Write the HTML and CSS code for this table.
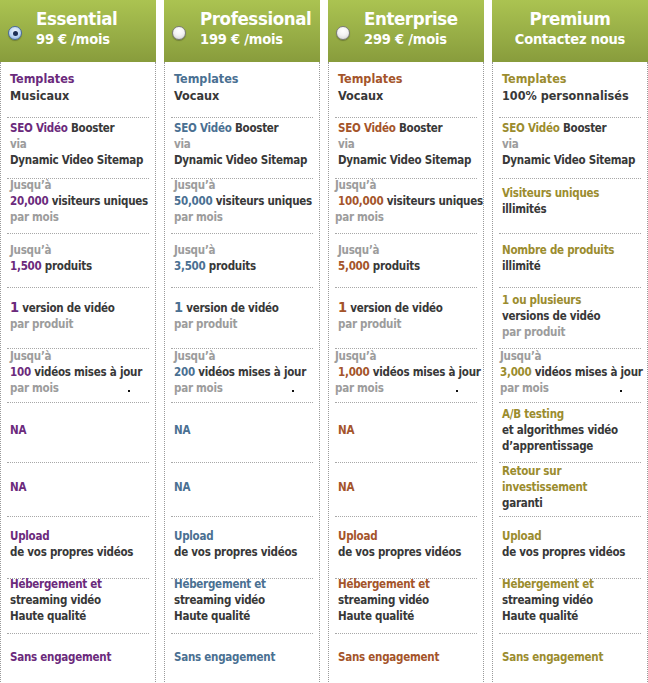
FILE: index.html
```html
<!DOCTYPE html>
<html lang="fr">
<head>
<meta charset="utf-8">
<title>Offres</title>
<link rel="stylesheet" href="styles.css">
</head>
<body>
<div class="plans">

  <div class="plan c1">
    <div class="head">
      <span class="radio checked"></span>
      <div class="title"><div class="name">Essential</div><div class="price">99 € /mois</div></div>
    </div>
    <div class="body">
      <div class="row r1"><div class="cell"><span class="hl">Templates</span><span>Musicaux</span></div></div>
      <div class="row r2"><div class="cell"><span><b class="hl">SEO Vidéo</b> Booster</span><span class="g">via</span><span>Dynamic Video Sitemap</span></div></div>
      <div class="row r3"><div class="cell"><span class="g">Jusqu’à</span><span><b class="hl">20,000</b> visiteurs uniques</span><span class="g">par mois</span></div></div>
      <div class="row r4"><div class="cell"><span class="g">Jusqu’à</span><span><b class="hl">1,500</b> produits</span></div></div>
      <div class="row r5"><div class="cell"><span><b class="hl big">1</b> version de vidéo</span><span class="g">par produit</span></div></div>
      <div class="row r6"><div class="cell"><span class="g">Jusqu’à</span><span><b class="hl">100</b> vidéos mises à jour</span><span class="g pm">par mois<i class="dot"></i></span></div></div>
      <div class="row r7"><div class="cell"><span class="hl">NA</span></div></div>
      <div class="row r8"><div class="cell"><span class="hl">NA</span></div></div>
      <div class="row r9"><div class="cell"><span class="hl">Upload</span><span>de vos propres vidéos</span></div></div>
      <div class="row r10"><div class="cell"><span class="hl">Hébergement et</span><span>streaming vidéo</span><span>Haute qualité</span></div></div>
      <div class="row r11"><div class="cell"><span class="hl">Sans engagement</span></div></div>
    </div>
  </div>

  <div class="plan c2">
    <div class="head">
      <span class="radio"></span>
      <div class="title"><div class="name">Professional</div><div class="price">199 € /mois</div></div>
    </div>
    <div class="body">
      <div class="row r1"><div class="cell"><span class="hl">Templates</span><span>Vocaux</span></div></div>
      <div class="row r2"><div class="cell"><span><b class="hl">SEO Vidéo</b> Booster</span><span class="g">via</span><span>Dynamic Video Sitemap</span></div></div>
      <div class="row r3"><div class="cell"><span class="g">Jusqu’à</span><span><b class="hl">50,000</b> visiteurs uniques</span><span class="g">par mois</span></div></div>
      <div class="row r4"><div class="cell"><span class="g">Jusqu’à</span><span><b class="hl">3,500</b> produits</span></div></div>
      <div class="row r5"><div class="cell"><span><b class="hl big">1</b> version de vidéo</span><span class="g">par produit</span></div></div>
      <div class="row r6"><div class="cell"><span class="g">Jusqu’à</span><span><b class="hl">200</b> vidéos mises à jour</span><span class="g pm">par mois<i class="dot"></i></span></div></div>
      <div class="row r7"><div class="cell"><span class="hl">NA</span></div></div>
      <div class="row r8"><div class="cell"><span class="hl">NA</span></div></div>
      <div class="row r9"><div class="cell"><span class="hl">Upload</span><span>de vos propres vidéos</span></div></div>
      <div class="row r10"><div class="cell"><span class="hl">Hébergement et</span><span>streaming vidéo</span><span>Haute qualité</span></div></div>
      <div class="row r11"><div class="cell"><span class="hl">Sans engagement</span></div></div>
    </div>
  </div>

  <div class="plan c3">
    <div class="head">
      <span class="radio"></span>
      <div class="title"><div class="name">Enterprise</div><div class="price">299 € /mois</div></div>
    </div>
    <div class="body">
      <div class="row r1"><div class="cell"><span class="hl">Templates</span><span>Vocaux</span></div></div>
      <div class="row r2"><div class="cell"><span><b class="hl">SEO Vidéo</b> Booster</span><span class="g">via</span><span>Dynamic Video Sitemap</span></div></div>
      <div class="row r3"><div class="cell"><span class="g out">Jusqu’à</span><span class="wide"><b class="hl">100,000</b> visiteurs uniques</span><span class="g out">par mois</span></div></div>
      <div class="row r4"><div class="cell"><span class="g">Jusqu’à</span><span><b class="hl">5,000</b> produits</span></div></div>
      <div class="row r5"><div class="cell"><span><b class="hl big">1</b> version de vidéo</span><span class="g">par produit</span></div></div>
      <div class="row r6"><div class="cell"><span class="g out">Jusqu’à</span><span class="wide"><b class="hl">1,000</b> vidéos mises à jour</span><span class="g pm out">par mois<i class="dot"></i></span></div></div>
      <div class="row r7"><div class="cell"><span class="hl">NA</span></div></div>
      <div class="row r8"><div class="cell"><span class="hl">NA</span></div></div>
      <div class="row r9"><div class="cell"><span class="hl">Upload</span><span>de vos propres vidéos</span></div></div>
      <div class="row r10"><div class="cell"><span class="hl">Hébergement et</span><span>streaming vidéo</span><span>Haute qualité</span></div></div>
      <div class="row r11"><div class="cell"><span class="hl">Sans engagement</span></div></div>
    </div>
  </div>

  <div class="plan c4">
    <div class="head center">
      <div class="title"><div class="name">Premium</div><div class="price">Contactez nous</div></div>
    </div>
    <div class="body">
      <div class="row r1"><div class="cell"><span class="hl">Templates</span><span>100% personnalisés</span></div></div>
      <div class="row r2"><div class="cell"><span><b class="hl">SEO Vidéo</b> Booster</span><span class="g">via</span><span>Dynamic Video Sitemap</span></div></div>
      <div class="row r3"><div class="cell"><span class="hl">Visiteurs uniques</span><span>illimités</span></div></div>
      <div class="row r4"><div class="cell"><span class="hl">Nombre de produits</span><span>illimité</span></div></div>
      <div class="row r5"><div class="cell"><span class="hl">1 ou plusieurs</span><span>versions de vidéo</span><span class="g">par produit</span></div></div>
      <div class="row r6"><div class="cell tight"><span class="g">Jusqu’à</span><span class="wide"><b class="hl">3,000</b> vidéos mises à jour</span><span class="g pm">par mois<i class="dot"></i></span></div></div>
      <div class="row r7"><div class="cell"><span class="hl">A/B testing</span><span>et algorithmes vidéo</span><span>d’apprentissage</span></div></div>
      <div class="row r8"><div class="cell"><span class="hl">Retour sur</span><span class="hl">investissement</span><span>garanti</span></div></div>
      <div class="row r9"><div class="cell"><span class="hl">Upload</span><span>de vos propres vidéos</span></div></div>
      <div class="row r10"><div class="cell"><span class="hl">Hébergement et</span><span>streaming vidéo</span><span>Haute qualité</span></div></div>
      <div class="row r11"><div class="cell"><span class="hl">Sans engagement</span></div></div>
    </div>
  </div>

</div>
</body>
</html>
```

FILE: styles.css
```css
html, body {
  margin: 0;
  padding: 0;
  background: #fff;
  overflow: hidden;
}

body {
  font-family: "DejaVu Sans Condensed", "DejaVu Sans", sans-serif;
  font-stretch: condensed;
  font-weight: bold;
  font-size: 11.5px;
  letter-spacing: -0.25px;
  color: #383838;
}

.plans {
  display: grid;
  grid-template-columns: repeat(4, 156px);
  column-gap: 8px;
  width: 648px;
  height: 683px;
  overflow: hidden;
}

.plan {
  display: flex;
  flex-direction: column;
  height: 720px;
}

.head {
  height: 62px;
  box-sizing: border-box;
  display: flex;
  align-items: flex-start;
  padding: 8px 0 0 8px;
  background: linear-gradient(#abc351, #96ac45 60%, #889c3c);
  color: #fff;
}

.head.center {
  justify-content: center;
  padding-left: 0;
  text-align: center;
}

.title .name {
  font-size: 18.5px;
  line-height: 22px;
  letter-spacing: -0.4px;
}

.title .price {
  font-size: 14.5px;
  line-height: 18px;
  letter-spacing: -0.2px;
}

.radio {
  width: 14px;
  height: 14px;
  box-sizing: border-box;
  border-radius: 50%;
  margin: 18px 14px 0 0;
  flex: none;
  border: 1px solid #7b7b7b;
  background: radial-gradient(circle at 50% 30%, #ffffff 0, #f4f4f4 45%, #cfcfcf 100%);
  box-shadow: 0 1px 1px rgba(0, 0, 0, 0.25);
  position: relative;
}

.radio.checked {
  border-color: #4a6a9e;
  background: radial-gradient(circle at 50% 35%, #eef5fd 0, #bcd6f3 55%, #7fa6d8 100%);
}

.radio.checked::after {
  content: "";
  position: absolute;
  left: 50%;
  top: 50%;
  width: 5px;
  height: 5px;
  margin: -2.5px 0 0 -2.5px;
  border-radius: 50%;
  background: #1d2f55;
}

.body {
  flex: 1;
  border-left: 1px dotted #9a9a9a;
  border-right: 1px dotted #9a9a9a;
  padding: 0 6px;
  display: flex;
  flex-direction: column;
}

.row {
  border-bottom: 1px dotted #a8a8a8;
  display: flex;
  flex-direction: column;
  justify-content: center;
  box-sizing: border-box;
}

.cell {
  display: flex;
  flex-direction: column;
  padding-left: 3px;
  line-height: 16px;
  white-space: nowrap;
}

.cell.tight { padding-left: 1px; }

.r1 { height: 56px; padding-bottom: 5px; }
.r1 .cell { font-size: 12.5px; line-height: 17px; letter-spacing: 0; }
.r2 { height: 61px; padding-bottom: 8px; }
.r3 { height: 55px; padding-bottom: 10px; }
.r4 { height: 54px; padding-bottom: 6px; }
.r5 { height: 61px; padding-bottom: 5px; }
.r6 { height: 54px; padding-bottom: 7px; }
.r7 { height: 60px; padding-bottom: 6px; }
.r8 { height: 54px; padding-bottom: 5px; }
.r9 { height: 62px; padding-bottom: 8px; }
.r10 { height: 55px; padding-bottom: 13px; }
.r11 { flex: 1; border-bottom: none; justify-content: flex-start; padding-top: 15px; }

.g { color: #9c9c9c; }
.out { margin-left: -3px; }
.wide { margin-right: -20px; }

.big { font-size: 14.5px; }

.pm {
  display: flex;
  align-items: baseline;
}

.dot {
  display: inline-block;
  width: 2px;
  height: 2px;
  background: #111;
  margin-left: auto;
  margin-right: 19px;
}

.c1 .hl { color: #6b2a7c; }
.c2 .hl { color: #4a7092; }
.c3 .hl { color: #a4542a; }
.c4 .hl { color: #9b8c2e; }
```
